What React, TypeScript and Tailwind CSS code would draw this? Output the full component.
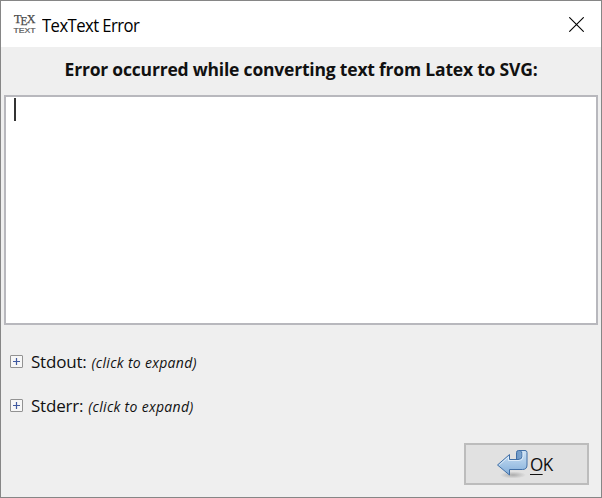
function TexIcon() {
  return (
    <svg className="h-[24px] w-[26px]" viewBox="0 0 26 24" fill="#4a4a4a">
      <g fontFamily="'Liberation Serif', serif" fontSize="12" stroke="#4a4a4a" strokeWidth="0.25">
        <text x="2" y="10.500" textLength="7.500" lengthAdjust="spacingAndGlyphs">T</text>
        <text x="8.500" y="12.500" textLength="7" lengthAdjust="spacingAndGlyphs">E</text>
        <text x="14.800" y="10.500" textLength="8.700" lengthAdjust="spacingAndGlyphs">X</text>
      </g>
      <text x="1.500" y="21" fill="#555" stroke="#555" strokeWidth="0.2" fontFamily="'Liberation Sans', sans-serif" fontSize="7.400" textLength="22" lengthAdjust="spacingAndGlyphs">TEXT</text>
    </svg>
  );
}

function ReturnIcon() {
  return (
    <svg className="h-[32px] w-[32px]" viewBox="0 0 32 32">
      <defs>
        <linearGradient id="arrow" x1="0" y1="0" x2="0" y2="1">
          <stop offset="0" stopColor="#cfe2f4" />
          <stop offset="0.5" stopColor="#a9c9e8" />
          <stop offset="1" stopColor="#82add9" />
        </linearGradient>
        <linearGradient id="fold" x1="0" y1="0" x2="1" y2="0">
          <stop offset="0" stopColor="#6c96c4" />
          <stop offset="1" stopColor="#8fb4da" />
        </linearGradient>
        <radialGradient id="shadow">
          <stop offset="0" stopColor="#777" stopOpacity="0.5" />
          <stop offset="1" stopColor="#777" stopOpacity="0" />
        </radialGradient>
      </defs>
      <ellipse cx="17" cy="27" rx="13" ry="3.500" fill="url(#shadow)" />
      <path d="M20.500 12V4.500q0-2 2-2h7v7l-5 3z" fill="url(#fold)" stroke="#416fa6" />
      <path d="M1.500 17 13.500 6.500V11.500h8.500q4 0 4-3V5.500q0-2-2-3h5q2 0 2 2V17q0 4.500-4.500 4.500h-13V27z" fill="url(#arrow)" stroke="#416fa6" strokeLinejoin="round" />
      <path d="M3.200 17 12.500 8.800V12.500H23q4 0 4-4V4.500" fill="none" stroke="#e8f2fb" strokeOpacity="0.8" />
    </svg>
  );
}

function Expander({ label }: { label: string }) {
  return (
    <div className="flex h-[43px] items-center">
      <span className="grid size-[13px] place-items-center rounded-[1px] border border-[#929292] bg-[#f7f7f7]">
        <svg className="size-[11px]" viewBox="0 0 11 11" stroke="#4059a0" strokeWidth="1.200">
          <path d="M2 5.500h7M5.500 2v7" />
        </svg>
      </span>
      <span className="ml-[8px] text-[17px] tracking-[-0.200px]">{label}</span>
      <span className="ml-[5px] mt-[2px] text-[14px] italic tracking-[0.300px]">(click to expand)</span>
    </div>
  );
}

export default function App() {
  return (
    <div className="flex h-[498px] w-[602px] flex-col border border-[#868686] bg-[#efefef] font-['Open_Sans','Noto_Sans',sans-serif] whitespace-nowrap text-[#111]">
      <header className="flex h-[46px] shrink-0 items-center bg-white pl-[11px] pr-[17px]">
        <TexIcon />
        <h1 className="ml-[4px] mt-[2px] origin-left scale-x-[0.925] text-[18px] tracking-[-0.600px] text-black">TexText Error</h1>
        <svg className="ml-auto size-[15px]" viewBox="0 0 15 15" stroke="#000" strokeWidth="1.100">
          <path d="M.3.3l14.400 14.400M14.700.3l-14.400 14.400" />
        </svg>
      </header>
      <h2 className="flex h-[48px] shrink-0 items-center justify-center pb-[3px] text-[17.500px] font-bold tracking-[-0.200px]">
        Error occurred while converting text from Latex to SVG:
      </h2>
      <main className="mx-[3px] h-[230px] shrink-0 border-2 border-[#b8b8bd] bg-white pl-[8px] pt-[1px]">
        <div className="h-[23px] w-[2px] bg-[#333]" />
      </main>
      <section className="mt-[15px] flex flex-col gap-px pl-[9px]">
        <Expander label="Stdout:" />
        <Expander label="Stderr:" />
      </section>
      <footer className="mt-[16px] flex justify-end pr-[12px]">
        <button className="flex h-[42px] w-[125px] items-center border-2 border-[#bcbcbc] bg-[#e1e1e1] pl-[30px] text-[18px]">
          <ReturnIcon />
          <span className="ml-[2px] origin-left scale-x-[0.950] tracking-[-0.700px]"><span className="underline decoration-1 underline-offset-[3px]">O</span>K</span>
        </button>
      </footer>
    </div>
  );
}
